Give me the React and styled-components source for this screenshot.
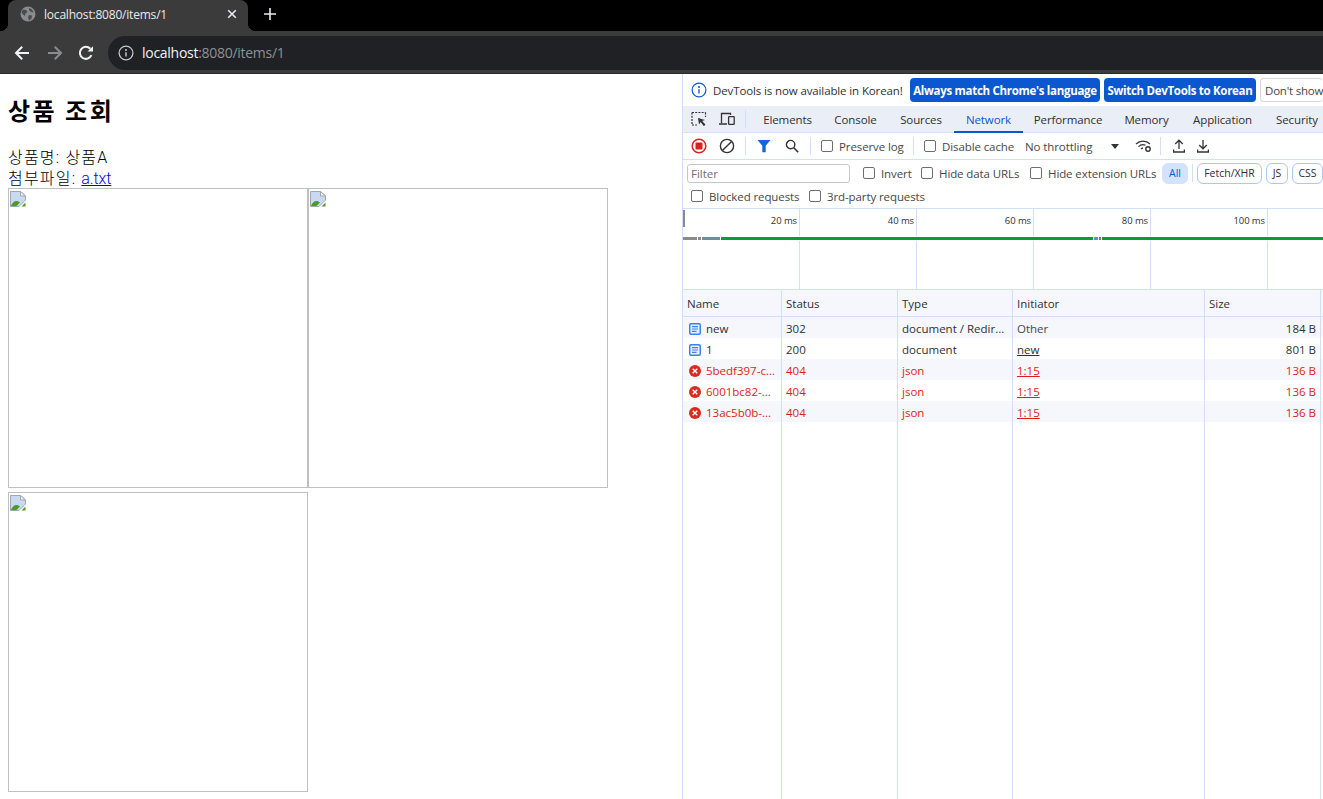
import React from "react";
import styled, { createGlobalStyle } from "styled-components";

const GlobalStyle = createGlobalStyle`
  html, body {
    margin: 0;
    height: 100%;
    overflow: hidden;
    background: #fff;
  }
  * {
    box-sizing: border-box;
  }
`;

const uiFont = `"Open Sans", Roboto, "Noto Sans CJK KR", sans-serif`;
const lineBlue = "#d0e0f8";

const devTabs = [
  { name: "Elements", w: 71 },
  { name: "Console", w: 65 },
  { name: "Sources", w: 66 },
  { name: "Network", w: 69, active: true },
  { name: "Performance", w: 90 },
  { name: "Memory", w: 67 },
  { name: "Application", w: 85 },
  { name: "Security", w: 64 },
];

const ticks = ["20 ms", "40 ms", "60 ms", "80 ms", "100 ms", ""];

const columns = ["Name", "Status", "Type", "Initiator", "Size"];

const requests = [
  { name: "new", status: "302", type: "document / Redir...", initiator: "Other", muted: true, size: "184 B" },
  { name: "1", status: "200", type: "document", initiator: "new", link: true, size: "801 B" },
  { name: "5bedf397-c...", status: "404", type: "json", initiator: "1:15", link: true, size: "136 B", error: true },
  { name: "6001bc82-...", status: "404", type: "json", initiator: "1:15", link: true, size: "136 B", error: true },
  { name: "13ac5b0b-...", status: "404", type: "json", initiator: "1:15", link: true, size: "136 B", error: true },
];

const segments = [
  { w: 14, c: "#8a8a8a" },
  { w: 1, c: "#fff" },
  { w: 3, c: "#8a8a8a" },
  { w: 1, c: "#fff" },
  { w: 18, c: "#6d8f9c" },
  { w: 1, c: "#fff" },
  { w: 372, c: "#0c9e2a" },
  { w: 1, c: "#fff" },
  { w: 4, c: "#3a9bf0" },
  { w: 1, c: "#fff" },
  { w: 2, c: "#777" },
  { w: 1, c: "#fff" },
  { w: 221, c: "#0c9e2a" },
];

// ---- icons ----

const Globe = () => (
  <svg width="16" height="16" viewBox="0 0 16 16">
    <circle cx="8" cy="8" r="7.5" fill="#8a8b8d" />
    <path d="M3 3.5l3 .5 1.5 2-2 1.5-.5 2.5-2.5-2-1-2zM9 2l3 1.5 1.5 3-2.5-.5-2-2zM9 9l3 .5-.5 3-2.5 2-1-3z" fill="#4a4b4d" />
  </svg>
);

const CloseIcon = () => (
  <svg width="10" height="10" viewBox="0 0 10 10">
    <path d="M1.2 1.2l7.6 7.6M8.8 1.2L1.2 8.8" stroke="#e8eaed" strokeWidth="1.6" />
  </svg>
);

const PlusIcon = () => (
  <svg width="12" height="12" viewBox="0 0 12 12">
    <path d="M6 0v12M0 6h12" stroke="#e8eaed" strokeWidth="1.6" />
  </svg>
);

const ArrowIcon = ({ color, flip }) => (
  <svg width="16" height="16" viewBox="0 0 16 16" style={flip ? { transform: "scaleX(-1)" } : undefined}>
    <path d="M15 8H2.5M8.2 1.8L2 8l6.2 6.2" fill="none" stroke={color} strokeWidth="2" />
  </svg>
);

const ReloadIcon = () => (
  <svg width="16" height="16" viewBox="0 0 16 16">
    <path d="M13.4 10.2A6 6 0 1 1 12.3 3.8" fill="none" stroke="#f1f3f4" strokeWidth="2" />
    <path d="M9.6 6.6H15V1.2z" fill="#f1f3f4" />
  </svg>
);

const InfoIcon = ({ color, size, width }) => (
  <svg width={size} height={size} viewBox="0 0 16 16" style={{ flex: "none" }}>
    <circle cx="8" cy="8" r="6.9" fill="none" stroke={color} strokeWidth={width} />
    <path d="M8 7.2v4.4" stroke={color} strokeWidth={width + 0.2} />
    <circle cx="8" cy="4.9" r="1" fill={color} />
  </svg>
);

const InspectIcon = () => (
  <svg width="16" height="16" viewBox="0 0 16 16">
    <path d="M1 1.5h13.5M1 1.5V13M1 14h5M14.5 1.5V6" fill="none" stroke="#333" strokeWidth="1.2" strokeDasharray="2 1.2" />
    <path d="M7 7l7 2-3 1 3 4-1.3 1-3-4-1.7 2.6z" fill="#333" />
    <path d="M8 8l6 6" stroke="#333" strokeWidth="1.3" />
  </svg>
);

const DeviceIcon = () => (
  <svg width="16" height="14" viewBox="0 0 16 14">
    <path d="M2.5 11V1.5h9V3M0 12h8" fill="none" stroke="#333" strokeWidth="1.3" />
    <rect x="9.6" y="4.6" width="5.6" height="7.8" rx="0.6" fill="none" stroke="#333" strokeWidth="1.3" />
  </svg>
);

const RecordIcon = () => (
  <svg width="16" height="16" viewBox="0 0 16 16">
    <circle cx="8" cy="8" r="6.8" fill="none" stroke="#dc2020" strokeWidth="1.5" />
    <rect x="4.5" y="4.5" width="7" height="7" rx="1" fill="#dc2020" />
  </svg>
);

const ClearIcon = () => (
  <svg width="16" height="16" viewBox="0 0 16 16">
    <circle cx="8" cy="8" r="6.6" fill="none" stroke="#333" strokeWidth="1.4" />
    <path d="M3.4 12.6l9.2-9.2" stroke="#333" strokeWidth="1.4" />
  </svg>
);

const FilterIcon = () => (
  <svg width="14" height="14" viewBox="0 0 14 14">
    <path d="M.5 1h13L8.7 6.8V13.2H5.3V6.8z" fill="#1068e0" />
  </svg>
);

const SearchIcon = () => (
  <svg width="14" height="14" viewBox="0 0 14 14">
    <circle cx="5.6" cy="5.6" r="4.2" fill="none" stroke="#333" strokeWidth="1.4" />
    <path d="M8.8 8.8l4.4 4.4" stroke="#333" strokeWidth="1.6" />
  </svg>
);

const WifiIcon = () => (
  <svg width="17" height="14" viewBox="0 0 17 14">
    <path d="M1 5a10 10 0 0 1 14 0M3.5 7.6a6.6 6.6 0 0 1 7-1.4M6 10a3 3 0 0 1 2-.8" fill="none" stroke="#333" strokeWidth="1.2" />
    <circle cx="13" cy="10" r="2.2" fill="none" stroke="#333" strokeWidth="1.4" />
  </svg>
);

const UploadIcon = () => (
  <svg width="12" height="14" viewBox="0 0 12 14">
    <path d="M6 10V1.5M2.2 5L6 1.2 9.8 5M.6 10.6v2.4h10.8v-2.4" fill="none" stroke="#333" strokeWidth="1.3" />
  </svg>
);

const DownloadIcon = () => (
  <svg width="12" height="14" viewBox="0 0 12 14">
    <path d="M6 1v8.5M2.2 6L6 9.8 9.8 6M.6 10.6v2.4h10.8v-2.4" fill="none" stroke="#333" strokeWidth="1.3" />
  </svg>
);

const DocIcon = () => (
  <svg width="12" height="12" viewBox="0 0 12 12" style={{ flex: "none" }}>
    <rect x="0.75" y="0.75" width="10.5" height="10.5" rx="1.2" fill="#e8f0fe" stroke="#3b82f0" strokeWidth="1.5" />
    <path d="M3 3.6h6M3 6h6M3 8.4h4.5" stroke="#3b82f0" strokeWidth="1.1" />
  </svg>
);

const ErrorIcon = () => (
  <svg width="12" height="12" viewBox="0 0 13 13" style={{ flex: "none" }}>
    <circle cx="6.5" cy="6.5" r="6.5" fill="#dc2a1e" />
    <path d="M4 4l5 5M9 4l-5 5" stroke="#fff" strokeWidth="1.5" />
  </svg>
);

const BrokenImage = () => (
  <svg width="16" height="16" viewBox="0 0 16 16">
    <path d="M.5.5h10L15.5 5v4L9 15.5H.5z" fill="#c9d9f2" stroke="#a0a6ae" />
    <path d="M10.5.5V5h5z" fill="#f4f4f4" stroke="#a0a6ae" />
    <path d="M1 15c1-3 3-5 5.5-5 1.3 0 2.5.6 3.5 1.5L6.5 15z" fill="#4c9a2a" />
    <path d="M11.5 15.5l4-4v4z" fill="#4c9a2a" />
  </svg>
);

// ---- app ----

export default function App() {
  return (
    <Browser>
      <GlobalStyle />
      <TabStrip>
        <Tab>
          <Globe />
          <TabTitle>localhost:8080/items/1</TabTitle>
          <CloseIcon />
        </Tab>
        <NewTab>
          <PlusIcon />
        </NewTab>
      </TabStrip>
      <Toolbar>
        <NavButton><ArrowIcon color="#f1f3f4" /></NavButton>
        <NavButton><ArrowIcon color="#8b8c8e" flip /></NavButton>
        <NavButton $left={-2}><ReloadIcon /></NavButton>
        <Omnibox>
          <InfoIcon color="#c4c7c5" size={16} width={1.3} />
          <Url>localhost<UrlRest>:8080/items/1</UrlRest></Url>
        </Omnibox>
      </Toolbar>
      <Main>
        <PagePane>
          <Heading>상품 조회</Heading>
          <Line>상품명: 상품A</Line>
          <Line>첨부파일: <FileLink href="#">a.txt</FileLink></Line>
          <Images>
            {[1, 2, 3].map((n) => (
              <ImageBox key={n}><BrokenImage /></ImageBox>
            ))}
          </Images>
        </PagePane>

        <DevTools>
          <InfoBar>
            <InfoIcon color="#0b57d0" size={16} width={1.2} />
            <InfoText>DevTools is now available in Korean!</InfoText>
            <BlueButton $w={190}>Always match Chrome's language</BlueButton>
            <BlueButton $w={152}>Switch DevTools to Korean</BlueButton>
            <GhostButton>Don't show</GhostButton>
          </InfoBar>

          <TabBar>
            <IconSlot $w={28}><InspectIcon /></IconSlot>
            <IconSlot $w={28}><DeviceIcon /></IconSlot>
            <Separator $gap={4} />
            <DevTabList>
              {devTabs.map((t) => (
                <DevTab key={t.name} $w={t.w} $active={t.active}>{t.name}</DevTab>
              ))}
            </DevTabList>
          </TabBar>

          <ToolRow>
            <IconSlot $w={28}><RecordIcon /></IconSlot>
            <IconSlot $w={28}><ClearIcon /></IconSlot>
            <Separator $gap={4} />
            <IconSlot $w={28}><FilterIcon /></IconSlot>
            <IconSlot $w={28}><SearchIcon /></IconSlot>
            <Separator $gap={4} />
            <Check $w={92} $left={6}><Box />Preserve log</Check>
            <Separator $gap={0} />
            <Check $w={100} $left={10}><Box />Disable cache</Check>
            <Throttle>No throttling</Throttle>
            <Caret />
            <IconSlot $w={28} $left={10}><WifiIcon /></IconSlot>
            <Separator $gap={3} />
            <IconSlot $w={24} $left={3}><UploadIcon /></IconSlot>
            <IconSlot $w={24}><DownloadIcon /></IconSlot>
          </ToolRow>

          <FilterBar>
            <FilterRow>
              <FilterInput placeholder="Filter" />
              <Check $w={58} $left={13}><Box />Invert</Check>
              <Check $w={109}><Box />Hide data URLs</Check>
              <Check $w={132}><Box />Hide extension URLs</Check>
              <Chip $w={26} $left={0} $selected>All</Chip>
              <Separator $gap={4} />
              <Chip $w={65} $left={0}>Fetch/XHR</Chip>
              <Chip $w={22} $left={4}>JS</Chip>
              <Chip $w={31} $left={4}>CSS</Chip>
            </FilterRow>
            <BlockedRow>
              <Check $w={118}><Box />Blocked requests</Check>
              <Check $w={120}><Box />3rd-party requests</Check>
            </BlockedRow>
          </FilterBar>

          <Overview>
            {ticks.map((t, i) => (
              <TickColumn key={i}>
                <TickLabel>{t}</TickLabel>
              </TickColumn>
            ))}
            <StartMark />
            <TimeLine>
              {segments.map((s, i) => (
                <TimeSegment key={i} $w={s.w} $c={s.c} />
              ))}
            </TimeLine>
          </Overview>

          <Table>
            <HeaderRow>
              {columns.map((c) => (
                <HeaderCell key={c}>{c}</HeaderCell>
              ))}
              <Cell />
            </HeaderRow>
            {requests.map((r, i) => (
              <Row key={i} $odd={i % 2 === 0} $error={r.error}>
                <NameCell>
                  {r.error ? <ErrorIcon /> : <DocIcon />}
                  <span>{r.name}</span>
                </NameCell>
                <Cell>{r.status}</Cell>
                <Cell>{r.type}</Cell>
                <Cell $link={r.link} $muted={r.muted}>{r.initiator}</Cell>
                <Cell $right>{r.size}</Cell>
                <Cell />
              </Row>
            ))}
            <FillerRow>
              {[...columns, ""].map((c) => (
                <Cell key={c} />
              ))}
            </FillerRow>
          </Table>
        </DevTools>
      </Main>
    </Browser>
  );
}

const Browser = styled.div`
  height: 100vh;
  display: flex;
  flex-direction: column;
  overflow: hidden;
  font-family: ${uiFont};
`;

const TabStrip = styled.div`
  height: 31px;
  flex: none;
  background: #000;
  display: flex;
  padding-left: 8px;
`;

const Tab = styled.div`
  position: relative;
  width: 240px;
  background: #3b3b3b;
  border-radius: 8px 8px 0 0;
  display: flex;
  align-items: center;
  gap: 8px;
  padding: 0 11px 3px 12px;
  color: #e8eaed;

  &::before,
  &::after {
    content: "";
    position: absolute;
    bottom: 0;
    width: 8px;
    height: 8px;
  }
  &::before {
    left: -8px;
    background: radial-gradient(circle at 0 0, #000 8px, #3b3b3b 8.5px);
  }
  &::after {
    right: -8px;
    background: radial-gradient(circle at 100% 0, #000 8px, #3b3b3b 8.5px);
  }
`;

const TabTitle = styled.span`
  flex: 1;
  font-size: 12px;
  letter-spacing: -0.2px;
  white-space: nowrap;
`;

const NewTab = styled.div`
  width: 28px;
  margin-left: 8px;
  display: flex;
  align-items: center;
  justify-content: center;
  padding-bottom: 3px;
`;

const Toolbar = styled.div`
  height: 43px;
  flex: none;
  background: #3b3b3b;
  border-bottom: 1px solid #2b2b2b;
  display: flex;
  align-items: center;
  padding: 1px 0 0 6px;
`;

const NavButton = styled.div`
  width: 32px;
  height: 32px;
  flex: none;
  display: flex;
  align-items: center;
  justify-content: center;
  margin-right: 1px;
  margin-left: ${(p) => p.$left || 0}px;
`;

const Omnibox = styled.div`
  flex: 1;
  margin-left: 5px;
  height: 34px;
  margin-right: -30px;
  background: #202124;
  border-radius: 17px;
  display: flex;
  align-items: center;
  gap: 8px;
  padding-left: 10px;
`;

const Url = styled.div`
  font-size: 14px;
  letter-spacing: -0.28px;
  color: #f1f3f4;
`;

const UrlRest = styled.span`
  color: #8e9194;
`;

const Main = styled.div`
  flex: 1;
  min-height: 0;
  display: flex;
`;

const PagePane = styled.div`
  width: 682px;
  flex: none;
  padding: 0 8px;
  color: #000;
  font-size: 16px;
`;

const Heading = styled.h2`
  margin: 20px 0;
  font-family: "Noto Sans CJK KR", sans-serif;
  font-size: 24px;
  line-height: 32px;
  font-weight: 700;
  letter-spacing: 2.5px;
`;

const Line = styled.div`
  line-height: 23px;
  height: 21px;
  font-family: Roboto, "Noto Sans CJK KR", sans-serif;
  font-weight: 300;
  letter-spacing: 1.2px;
`;

const FileLink = styled.a`
  color: #0000ee;
  text-decoration: underline;
  font-weight: 300;
  letter-spacing: -0.1px;
`;

const Images = styled.div`
  display: flex;
  flex-wrap: wrap;
  row-gap: 4px;
`;

const ImageBox = styled.div`
  width: 300px;
  height: 300px;
  border: 1px solid #c0c0c0;
  padding: 1px;
`;

const DevTools = styled.div`
  flex: 1;
  min-width: 0;
  display: flex;
  flex-direction: column;
  border-left: 1px solid ${lineBlue};
  font-size: 11.5px;
  color: #303030;
  overflow: hidden;
  white-space: nowrap;
`;

const InfoBar = styled.div`
  height: 32px;
  flex: none;
  display: flex;
  align-items: center;
  padding-left: 8px;
  gap: 4px;
`;

const InfoText = styled.span`
  margin-left: 2px;
  width: 193px;
  flex: none;
  font-size: 11.5px;
  letter-spacing: -0.12px;
`;

const BlueButton = styled.div`
  width: ${(p) => p.$w}px;
  height: 24px;
  flex: none;
  border-radius: 4px;
  background: #0b57d0;
  color: #fff;
  font-size: 11.5px;
  font-weight: 700;
  letter-spacing: -0.3px;
  display: flex;
  align-items: center;
  justify-content: center;
`;

const GhostButton = styled.div`
  height: 24px;
  flex: none;
  border-radius: 4px;
  border: 1px solid #d5d8dc;
  border-right: 0;
  display: flex;
  align-items: center;
  padding-left: 4px;
  color: #474747;
  letter-spacing: -0.2px;
`;

const TabBar = styled.div`
  height: 27px;
  flex: none;
  background: #eaeef7;
  border-bottom: 1px solid ${lineBlue};
  display: flex;
  align-items: center;
  padding-left: 2px;
`;

const IconSlot = styled.div`
  width: ${(p) => p.$w}px;
  margin-left: ${(p) => p.$left || 0}px;
  flex: none;
  display: flex;
  align-items: center;
  justify-content: center;
`;

const Separator = styled.div`
  width: 1px;
  height: 18px;
  flex: none;
  background: ${lineBlue};
  margin: 0 ${(p) => p.$gap}px;
`;

const DevTabList = styled.div`
  display: flex;
  align-self: stretch;
  margin-left: 2px;
`;

const DevTab = styled.div`
  width: ${(p) => p.$w}px;
  flex: none;
  display: flex;
  align-items: center;
  justify-content: center;
  color: ${(p) => (p.$active ? "#0b57d0" : "#303030")};
  border-bottom: 2px solid ${(p) => (p.$active ? "#0b57d0" : "transparent")};
  border-top: 2px solid transparent;
  margin-bottom: -1px;
  letter-spacing: -0.1px;
`;

const ToolRow = styled.div`
  height: 27px;
  flex: none;
  border-bottom: 1px solid ${lineBlue};
  display: flex;
  align-items: center;
  padding-left: 2px;
`;

const Check = styled.label`
  width: ${(p) => p.$w}px;
  margin-left: ${(p) => p.$left || 0}px;
  flex: none;
  display: flex;
  align-items: center;
  gap: 6px;
  color: #474747;
  letter-spacing: -0.1px;
`;

const Box = styled.span`
  width: 12px;
  height: 12px;
  flex: none;
  border: 1px solid #6e6e6e;
  border-radius: 2px;
`;

const Throttle = styled.span`
  width: 80px;
  margin-left: 1px;
  flex: none;
  color: #474747;
  letter-spacing: -0.1px;
`;

const Caret = styled.span`
  width: 0;
  height: 0;
  flex: none;
  margin-left: 6px;
  border-left: 4px solid transparent;
  border-right: 4px solid transparent;
  border-top: 5px solid #333;
`;

const FilterBar = styled.div`
  flex: none;
  height: 49px;
  border-bottom: 1px solid ${lineBlue};
  display: flex;
  flex-direction: column;
`;

const FilterRow = styled.div`
  height: 26px;
  display: flex;
  align-items: center;
  padding-left: 4px;
`;

const FilterInput = styled.input`
  width: 163px;
  height: 19px;
  flex: none;
  border: 1px solid #c4c7c9;
  border-radius: 3px;
  padding: 0 3px;
  font-family: ${uiFont};
  font-size: 11.5px;
  outline: none;
  &::placeholder {
    color: #6e6e6e;
  }
`;

const Chip = styled.div`
  width: ${(p) => p.$w}px;
  margin-left: ${(p) => p.$left}px;
  height: 21px;
  flex: none;
  border-radius: 6px;
  display: flex;
  align-items: center;
  justify-content: center;
  font-size: 10.5px;
  color: ${(p) => (p.$selected ? "#0b57d0" : "#303030")};
  background: ${(p) => (p.$selected ? "#d3e3fd" : "#fff")};
  border: 1px solid ${(p) => (p.$selected ? "#d3e3fd" : "#a9c7fa")};
`;

const BlockedRow = styled.div`
  height: 20px;
  display: flex;
  align-items: center;
  padding-left: 8px;
`;

const Overview = styled.div`
  position: relative;
  height: 81px;
  flex: none;
  display: flex;
  border-bottom: 1px solid ${lineBlue};
`;

const TickColumn = styled.div`
  width: 117px;
  flex: none;
  border-right: 1px solid ${lineBlue};
  padding: 3px 2px 0 0;
  text-align: right;
`;

const TickLabel = styled.span`
  font-size: 9.5px;
  letter-spacing: -0.1px;
  color: #303030;
`;

const StartMark = styled.div`
  position: absolute;
  left: 0;
  top: 1px;
  width: 2px;
  height: 17px;
  background: #8a8a8a;
`;

const TimeLine = styled.div`
  position: absolute;
  left: 0;
  right: 0;
  top: 27px;
  height: 5px;
  padding: 1px 0;
  background: #fff;
  display: flex;
`;

const TimeSegment = styled.div`
  width: ${(p) => p.$w}px;
  flex: none;
  background: ${(p) => p.$c};
`;

const Table = styled.div`
  flex: 1;
  min-height: 0;
  display: flex;
  flex-direction: column;
`;

const gridColumns = "99px 116px 115px 192px 116px 1fr";

const HeaderRow = styled.div`
  display: grid;
  grid-template-columns: ${gridColumns};
  height: 27px;
  flex: none;
  background: #f5f7fc;
  border-bottom: 1px solid ${lineBlue};
`;

const Row = styled.div`
  display: grid;
  grid-template-columns: ${gridColumns};
  grid-template-rows: 21px;
  height: 21px;
  flex: none;
  background: ${(p) => (p.$odd ? "#f5f7fc" : "#fff")};
  color: ${(p) => (p.$error ? "#dc1e14" : "#303030")};

  & > div {
    padding-top: 2px;
  }
`;

const FillerRow = styled.div`
  display: grid;
  grid-template-columns: ${gridColumns};
  flex: 1;
`;

const Cell = styled.div`
  border-right: 1px solid ${lineBlue};
  padding: 0 4px;
  display: flex;
  align-items: center;
  overflow: hidden;
  justify-content: ${(p) => (p.$right ? "flex-end" : "flex-start")};
  text-decoration: ${(p) => (p.$link ? "underline" : "none")};
  color: ${(p) => (p.$muted ? "#474747" : "inherit")};
`;

const HeaderCell = styled(Cell)`
  color: #303030;
`;

const NameCell = styled(Cell)`
  gap: 5px;
  padding-left: 6px;
`;
